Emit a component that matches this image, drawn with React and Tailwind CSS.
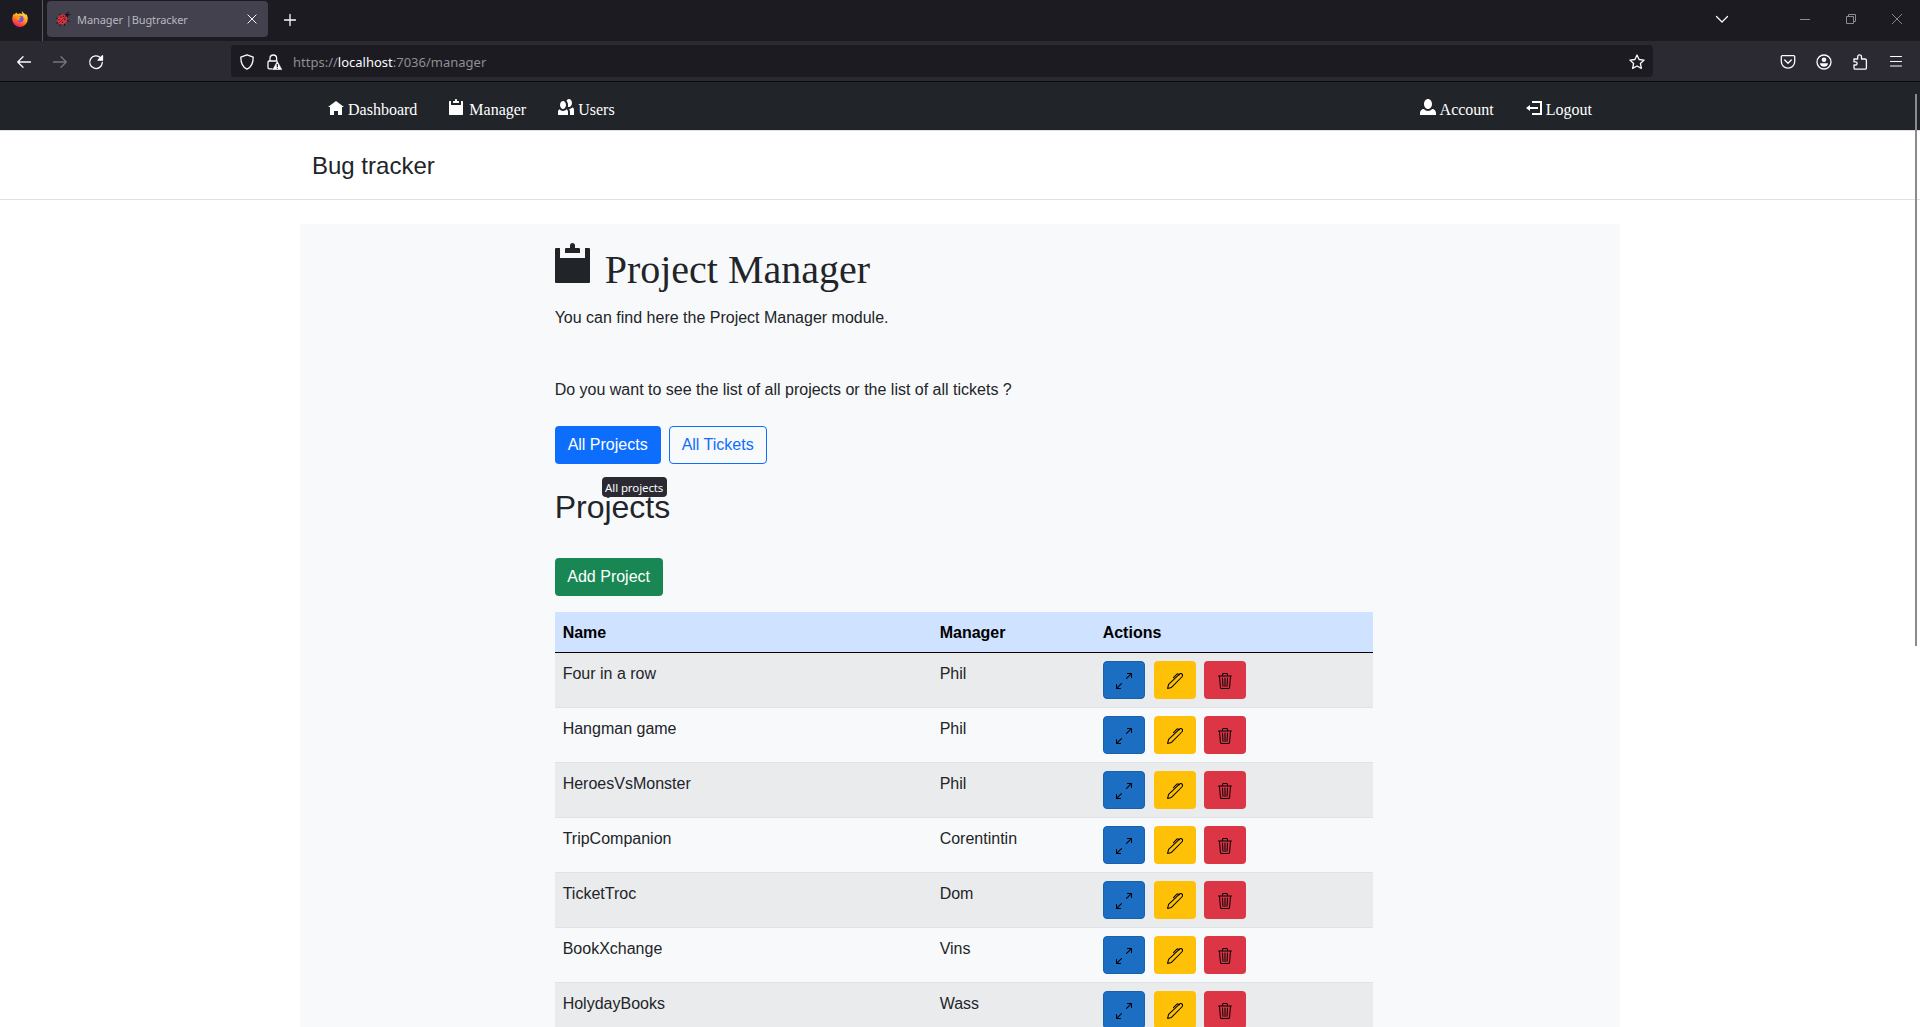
const OI = {
  home: "M4 1l-4 3h1v4h2v-2h2v2h2v-4.03l1 .03-4-3z",
  clipboard:
    "M3.5 0c-.28 0-.5.22-.5.5v.5h-.75c-.14 0-.25.11-.25.25v.75h3v-.75c0-.14-.11-.25-.25-.25h-.75v-.5c0-.28-.22-.5-.5-.5zm-3.25 1c-.14 0-.25.11-.25.25v6.5c0 .14.11.25.25.25h6.5c.14 0 .25-.11.25-.25v-6.5c0-.14-.11-.25-.25-.25h-.75v2h-5v-2h-.75z",
  people:
    "M5.5 0c-.51 0-.95.35-1.22.88.45.54.72 1.28.72 2.13 0 .29-.03.55-.09.81.19.11.38.19.59.19.83 0 1.5-.9 1.5-2s-.67-2-1.5-2zm-3 1c-.83 0-1.5.9-1.5 2s.67 2 1.5 2 1.5-.9 1.5-2-.67-2-1.5-2zm4.75 3.16c-.43.51-1.02.82-1.69.84.27.38.44.84.44 1.34v1.66h2v-2.66c0-.52-.31-.97-.75-1.19zm-6.5 1c-.44.22-.75.67-.75 1.19v1.66h5v-1.66c0-.52-.31-.97-.75-1.19-.45.53-1.06.84-1.75.84s-1.3-.32-1.75-.84z",
  person:
    "M4 0c-1.1 0-2 1.12-2 2.5s.9 2.5 2 2.5 2-1.12 2-2.5-.9-2.5-2-2.5zm-2.09 5c-1.06.05-1.91.92-1.91 2v1h8v-1c0-1.08-.84-1.95-1.91-2-.54.61-1.28 1-2.09 1-.81 0-1.55-.39-2.09-1z",
  logout: "M3 1v1h4v5h-4v1h5v-7h-5zm-1 2l-2 1.5 2 1.5v-1h4v-1h-4v-1z",
};

function Oi({ name, className }) {
  return (
    <svg viewBox="0 0 8 8" fill="currentColor" className={className}>
      <path d={OI[name]} />
    </svg>
  );
}

function Line({ className, children }) {
  return (
    <svg
      viewBox="0 0 16 16"
      fill="none"
      stroke="currentColor"
      strokeWidth="1.3"
      strokeLinecap="round"
      strokeLinejoin="round"
      className={className}
    >
      {children}
    </svg>
  );
}

function FirefoxLogo() {
  return (
    <svg viewBox="0 0 16 16" className="size-4">
      <defs>
        <linearGradient id="flame" x1="0.8" y1="0" x2="0.3" y2="1">
          <stop offset="0" stopColor="#fff14a" />
          <stop offset="0.4" stopColor="#ffb01e" />
          <stop offset="0.75" stopColor="#ff4f37" />
          <stop offset="1" stopColor="#e8176b" />
        </linearGradient>
      </defs>
      <path
        fill="url(#flame)"
        d="M10 0c-.6 1.300.3 2 .6 3C9.600 2.600 7.500 2.200 6.300 3 5.500 2.600 4.600 2.300 4.400 1.400 3.500 2 3 2.800 3 3.600 2.500 3.500 2.200 3.100 2.100 2.500 1 3.800.2 5.600.2 8.200A7.800 7.800 0 0 0 15.800 8c0-2-.7-4-1.900-5.200.1.600.1 1 0 1.400C13.200 2.300 10.700 2.200 10 0z"
      />
      <circle cx="8.400" cy="8" r="3.200" fill="#7a4ce6" />
      <path fill="#ff980e" d="M3.500 5.200c1.500-1 3.300-.6 4.300.4l1.600.3c-.1.900-1.700 1-2 1.500-.3.900 0 1.300 1 1.600-2 1.200-4.300-.2-4.900-3.800z" />
    </svg>
  );
}

function BugIcon() {
  return (
    <svg viewBox="0 0 16 16" className="size-4">
      <path
        d="M1 7l3 1M1.500 12.500l3-2M5 15.500l1-3M10 15l-1-3M14.500 10.500l-3-1M4.500 2.500l1.500 2.500M12 4l.5-2.500L14 1M12 4l3.500-.5"
        fill="none"
        stroke="#15141a"
        strokeWidth="1"
      />
      <circle cx="11.300" cy="4.700" r="2" fill="#15141a" />
      <ellipse cx="7.300" cy="8.500" rx="5.200" ry="4.700" fill="#e0323c" transform="rotate(-45 7.300 8.500)" />
      <path d="M4 12l7-7" stroke="#5a1820" strokeWidth=".7" />
      <g fill="#35121a">
        <circle cx="6" cy="6" r=".8" />
        <circle cx="8.500" cy="5.200" r=".7" />
        <circle cx="4" cy="8.800" r=".7" />
        <circle cx="9.900" cy="8.400" r=".8" />
        <circle cx="7.500" cy="11.200" r=".8" />
      </g>
    </svg>
  );
}

function TabBar() {
  return (
    <div className="flex h-[41px] bg-[#1c1b22] text-[#fbfbfe]">
      <div className="flex w-[43px] shrink-0 items-center border-r border-[#5b5a63] pb-[3px] pl-3">
        <FirefoxLogo />
      </div>
      <div className="ml-1 mt-px flex h-9 w-[221px] items-center rounded bg-[#42414d] pl-2 pr-2.5">
        <BugIcon />
        <span className="ml-1.5 flex-1 whitespace-nowrap pt-0.5 font-['Noto_Sans',sans-serif] text-[11px] tracking-[-0.1px] text-[#b9b8c0]">
          Manager |Bugtracker
        </span>
        <Line className="size-3">
          <path d="M2.500 2.500l11 11M13.500 2.500l-11 11" />
        </Line>
      </div>
      <div className="flex h-[39px] items-center pl-3.5">
        <Line className="size-4">
          <path d="M8 2.500v11M2.500 8h11" />
        </Line>
      </div>
      <div className="ml-auto flex h-[38px] items-center">
        <Line className="mr-[70px] size-4">
          <path d="M2.500 5.500l5.500 5.500 5.500-5.500" />
        </Line>
        <div className="mr-9 h-px w-2.5 bg-[#8b8a90]" />
        <svg viewBox="0 0 10 10" fill="none" stroke="#8b8a90" className="mr-9 size-2.5">
          <path d="M.5 2.500h7v7h-7zM2.500 2.500v-2h7v7h-2" />
        </svg>
        <svg viewBox="0 0 10 10" fill="none" stroke="#a09fa5" strokeWidth=".8" className="mr-[18px] size-2.5">
          <path d="M0 0l10 10M10 0L0 10" />
        </svg>
      </div>
    </div>
  );
}

function Toolbar() {
  return (
    <div className="flex h-[41px] items-center border-b border-[#0c0c0d] bg-[#2b2a33] text-[#fbfbfe]">
      <div className="flex w-[231px] shrink-0 items-center gap-5 pl-4 pt-0.5">
        <Line className="size-4">
          <path d="M14.500 8H1.700M7 2.700L1.700 8 7 13.300" />
        </Line>
        <Line className="size-4 text-[#77767e]">
          <path d="M1.500 8h12.800M9 2.700L14.300 8 9 13.300" />
        </Line>
        <Line className="size-4">
          <path d="M14.300 8.500A6.300 6.300 0 1 1 12.500 3.800" />
          <path d="M14.500 1.800v4.400h-4.400z" fill="currentColor" />
        </Line>
      </div>
      <div className="flex h-8 w-[1422px] shrink-0 items-center rounded bg-[#1c1b22] px-2 pt-0.5">
        <Line className="size-4">
          <path d="M8 .8l6.200 2.400c0 5-1.500 9.800-6.200 12-4.700-2.200-6.200-7-6.200-12z" />
        </Line>
        <svg viewBox="0 0 16 16" className="ml-[11px] size-4">
          <path
            d="M4 7V4.300a3.300 3.300 0 0 1 6.600 0V7M6.500 14.800H3.200a1.200 1.200 0 0 1-1.200-1.200V8.200A1.200 1.200 0 0 1 3.200 7h8.200"
            fill="none"
            stroke="#fbfbfe"
            strokeWidth="1.300"
          />
          <path d="M11.300 7.200l4.700 8.600H6.600z" fill="#fbfbfe" stroke="#fbfbfe" strokeWidth=".4" strokeLinejoin="round" />
          <path d="M11.300 10v3M11.300 13.700v1" stroke="#1c1b22" strokeWidth="1.200" />
        </svg>
        <span className="ml-[11px] flex-1 whitespace-nowrap pt-0.5 font-['Noto_Sans',sans-serif] text-[13px] text-[#8f8e96]">
          https://<span className="text-[#fbfbfe]">localhost</span>:7036/manager
        </span>
        <Line className="size-4">
          <path d="M8 1l2.100 4.500 5 .6-3.700 3.400 1 4.900L8 12l-4.400 2.400 1-4.900L.9 6.100l5-.6z" />
        </Line>
      </div>
      <div className="ml-auto flex items-center gap-5 pr-4 pt-0.5">
        <Line className="size-4">
          <path d="M2.200 1.700h11.600a.9.900 0 0 1 .9.900V7.500a6.700 6.700 0 0 1-13.400 0V2.600a.9.900 0 0 1 .9-.9z" />
          <path d="M4.700 6L8 9.200 11.300 6" />
        </Line>
        <Line className="size-4">
          <circle cx="8" cy="8" r="7" />
          <circle cx="8" cy="5.800" r="2.300" fill="currentColor" stroke="none" />
          <path d="M4 9.200h8c0 2.300-2 3.600-4 3.600s-4-1.300-4-3.600z" fill="currentColor" stroke="none" />
        </Line>
        <Line className="size-4">
          <path d="M2 5h3.700V2.800a1.900 1.900 0 0 1 3.800 0V5h3.700a1.200 1.200 0 0 1 1.200 1.200v7.800a1.200 1.200 0 0 1-1.200 1.200H3.200A1.200 1.200 0 0 1 2 14v-3h1.500a1.600 1.600 0 0 0 0-3.200H2z" />
        </Line>
        <Line className="size-4">
          <path d="M2.500 2.500h11M2.500 7.500h11M2.500 12h11" strokeWidth="1.200" />
        </Line>
      </div>
    </div>
  );
}

function NavLink({ icon, children }) {
  return (
    <a className="flex items-center gap-1 px-4">
      <Oi name={icon} className="-mt-[7px] size-4" />
      {children}
    </a>
  );
}

function SiteNav() {
  return (
    <nav className="h-12 bg-[#212529] font-['Liberation_Serif',serif] text-base text-white">
      <div className="mx-auto flex h-full w-[1320px] justify-between px-3 pt-1">
        <div className="flex items-center pt-1">
          <NavLink icon="home">Dashboard</NavLink>
          <NavLink icon="clipboard">Manager</NavLink>
          <NavLink icon="people">Users</NavLink>
        </div>
        <div className="flex items-center pt-1">
          <NavLink icon="person">Account</NavLink>
          <NavLink icon="logout">Logout</NavLink>
        </div>
      </div>
    </nav>
  );
}

function BiIcon({ children }) {
  return (
    <svg viewBox="0 0 16 16" fill="currentColor" className="size-4">
      {children}
    </svg>
  );
}

function RowActions() {
  return (
    <div className="flex gap-2 text-black">
      <button className="mr-px flex h-[38px] w-[42px] items-center justify-center rounded border border-[#1861ac] bg-[#1b6ec2] pt-0.5">
        <BiIcon>
          <path
            fillRule="evenodd"
            d="M5.828 10.172a.5.5 0 0 0-.707 0l-4.096 4.096V11.500a.5.5 0 0 0-1 0v3.975a.5.5 0 0 0 .5.5H4.500a.5.5 0 0 0 0-1H1.732l4.096-4.096a.5.5 0 0 0 0-.707zm4.344-4.344a.5.5 0 0 0 .707 0l4.096-4.096V4.500a.5.5 0 1 0 1 0V.525a.5.5 0 0 0-.5-.5H11.500a.5.5 0 0 0 0 1h2.768l-4.096 4.096a.5.5 0 0 0 0 .707z"
          />
        </BiIcon>
      </button>
      <button className="flex h-[38px] w-[42px] items-center justify-center rounded bg-[#ffc107] pt-0.5">
        <svg
          viewBox="0 0 16 16"
          fill="none"
          stroke="currentColor"
          strokeWidth="1.050"
          strokeLinejoin="round"
          strokeLinecap="round"
          className="size-4"
        >
          <path d="M.6 15.400l1-4.100L12.200 1.300c1-.9 2.200-.9 2.900-.2.600.7.500 2-.3 2.900L4.500 14.400z" />
          <path d="M6.500 4.600l3.400-3.400a1.200 1.200 0 0 1 1.600 0l1 .5" />
        </svg>
      </button>
      <button className="flex h-[38px] w-[42px] items-center justify-center rounded bg-[#dc3545] pt-0.5">
        <BiIcon>
          <path d="M6.500 1h3a.5.5 0 0 1 .5.5v1H6v-1a.5.5 0 0 1 .5-.5ZM11 2.500v-1A1.500 1.500 0 0 0 9.500 0h-3A1.500 1.500 0 0 0 5 1.500v1H2.506a.58.58 0 0 0-.01 0H1.500a.5.5 0 0 0 0 1h.538l.853 10.660A2 2 0 0 0 4.885 16h6.230a2 2 0 0 0 1.994-1.840l.853-10.660h.538a.5.5 0 0 0 0-1h-.995a.59.59 0 0 0-.01 0H11Zm1.958 1-.846 10.580a1 1 0 0 1-.997.920h-6.230a1 1 0 0 1-.997-.920L3.042 3.500h9.916Zm-7.487 1a.5.5 0 0 1 .528.470l.5 8.500a.5.5 0 0 1-.998.060L5 5.030a.5.5 0 0 1 .470-.530Zm5.058 0a.5.5 0 0 1 .470.530l-.5 8.500a.5.5 0 1 1-.998-.060l.5-8.500a.5.5 0 0 1 .528-.470ZM8 4.500a.5.5 0 0 1 .5.500v8.500a.5.5 0 0 1-1 0V5a.5.5 0 0 1 .5-.5Z" />
        </BiIcon>
      </button>
    </div>
  );
}

const PROJECTS = [
  ["Four in a row", "Phil"],
  ["Hangman game", "Phil"],
  ["HeroesVsMonster", "Phil"],
  ["TripCompanion", "Corentintin"],
  ["TicketTroc", "Dom"],
  ["BookXchange", "Vins"],
  ["HolydayBooks", "Wass"],
];

function ProjectTable() {
  return (
    <table className="mt-4 w-[818px] table-fixed border-separate border-spacing-0 text-left">
      <colgroup>
        <col className="w-[377px]" />
        <col className="w-[163px]" />
        <col />
      </colgroup>
      <thead>
        <tr className="h-[41px] text-black">
          <th className="border-b border-black bg-[#cfe2ff] px-2 pb-[7px] pt-[9px]">Name</th>
          <th className="border-b border-black bg-[#cfe2ff] px-2 pb-[7px] pt-[9px]">Manager</th>
          <th className="border-b border-black bg-[#cfe2ff] px-2 pb-[7px] pt-[9px]">Actions</th>
        </tr>
      </thead>
      <tbody>
        {PROJECTS.map(([name, manager]) => (
          <tr key={name} className="h-[55px] align-top odd:bg-[#eaebed]">
            <td className="border-b border-[#dee2e6] px-2 pt-[9px]">{name}</td>
            <td className="border-b border-[#dee2e6] px-2 pt-[9px]">{manager}</td>
            <td className="border-b border-[#dee2e6] p-2">
              <RowActions />
            </td>
          </tr>
        ))}
      </tbody>
    </table>
  );
}

export default function App() {
  return (
    <div className="relative flex h-[1027px] w-[1920px] flex-col overflow-hidden bg-white font-['Liberation_Sans',Arial,sans-serif] text-base text-[#212529]">
      <TabBar />
      <Toolbar />
      <SiteNav />
      <header className="h-[70px] shrink-0 border-y border-[#dee2e6]">
        <div className="mx-auto w-[1320px] px-3 pt-[19px] text-2xl">Bug tracker</div>
      </header>
      <main className="mx-auto mt-6 h-[803px] w-[1320px] shrink-0 overflow-hidden bg-[#f8f9fa] pl-[254.67px] pt-4">
        <h1 className="flex h-14 gap-2.5 font-['Liberation_Serif',serif] text-[40px] leading-[60px]">
          <Oi name="clipboard" className="mt-[3px] size-10" />
          Project Manager
        </h1>
        <p className="mt-[10px]">You can find here the Project Manager module.</p>
        <p className="mt-12">Do you want to see the list of all projects or the list of all tickets ?</p>
        <div className="relative mt-6 flex gap-2">
          <button className="h-[38px] w-[106px] rounded bg-[#0d6efd] text-white">All Projects</button>
          <button className="h-[38px] w-[98px] rounded border border-[#0d6efd] text-[#0d6efd]">All Tickets</button>
          <div className="absolute left-[47px] top-[51px] flex h-5 w-[65px] items-center justify-center whitespace-nowrap rounded bg-[#2b2a33] pt-px font-['Noto_Sans',sans-serif] text-[11.500px] tracking-[-0.1px] text-[#fbfbfe]">
            All projects
          </div>
        </div>
        <h2 className="mt-6 text-[32px] leading-[38px]">Projects</h2>
        <button className="mt-8 block h-[38px] w-[108px] rounded bg-[#198754] text-white">Add Project</button>
        <ProjectTable />
      </main>
      <div className="absolute left-[1915px] top-[94px] h-[552px] w-0.5 bg-[#8b8b8d]" />
    </div>
  );
}
